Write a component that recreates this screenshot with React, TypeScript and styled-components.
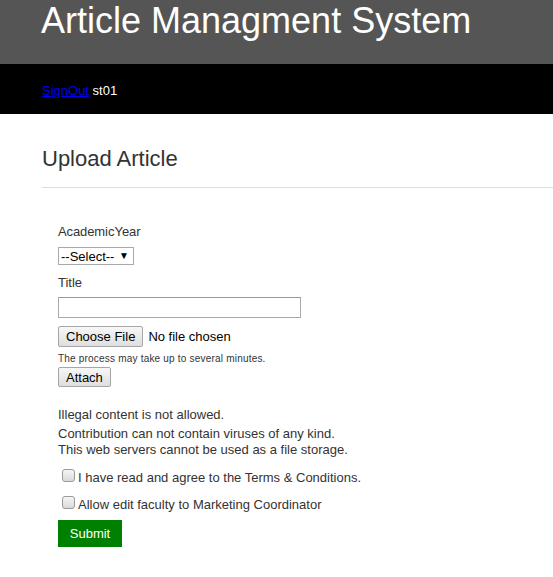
import React from "react";
import styled, { createGlobalStyle } from "styled-components";

const Global = createGlobalStyle`
  html, body { margin: 0; padding: 0; background: #fff; }
  body { font-family: "Liberation Sans", Arial, sans-serif; color: #333; }
  * { box-sizing: border-box; }
`;

const Header = styled.header`
  height: 64px;
  background: #555;
  padding: 0 41px;
`;

const SiteTitle = styled.h1`
  margin: 0;
  font-size: 36px;
  line-height: 42px;
  font-weight: normal;
  color: #fff;
`;

const NavBar = styled.nav`
  height: 50px;
  background: #000;
  padding: 19px 42px 0;
  font-size: 13px;
  line-height: 15px;
  color: #fff;
`;

const NavLink = styled.a`
  color: #0000ee;
  text-decoration: underline;
`;

const Main = styled.main`
  padding-left: 42px;
`;

const PageTitle = styled.h2`
  margin: 32px 0 0;
  font-size: 22px;
  line-height: 25px;
  font-weight: normal;
  color: #333;
`;

const Rule = styled.hr`
  margin: 16px 0 0;
  border: 0;
  border-top: 1px solid #dddddd;
  height: 0;
`;

const Form = styled.form`
  display: flex;
  flex-direction: column;
  align-items: flex-start;
  padding-left: 16px;
  font-size: 13px;
  line-height: 15px;
`;

const Label = styled.label<{ $top: number; $tight?: boolean }>`
  display: block;
  margin-top: ${(p) => p.$top}px;
  color: #333;
  word-spacing: ${(p) => (p.$tight ? "-3px" : "normal")};
  letter-spacing: ${(p) => (p.$tight ? "-0.1px" : "normal")};
`;

const SelectWrap = styled.div`
  position: relative;
  margin-top: 8px;
  width: 76px;
  height: 18px;
`;

const Select = styled.select`
  appearance: none;
  width: 100%;
  height: 100%;
  border: 1px solid #a9a9a9;
  background: #fff;
  font-family: inherit;
  font-size: 13px;
  color: #000;
  padding: 0 0 0 2px;
  margin: 0;
  border-radius: 0;
`;

const Arrow = styled.span`
  position: absolute;
  right: 5px;
  top: 3px;
  font-size: 10px;
  line-height: 12px;
  color: #000;
  pointer-events: none;
`;

const TextInput = styled.input`
  margin-top: 7px;
  width: 243px;
  height: 21px;
  border: 1px solid #a9a9a9;
  border-top-color: #999;
  padding: 0 3px;
  font-family: inherit;
  font-size: 13px;
`;

const FileRow = styled.div`
  margin-top: 8px;
  display: flex;
  align-items: center;
  gap: 5px;
  height: 21px;
  color: #000;
`;

const GrayButton = styled.button<{ $h: number }>`
  height: ${(p) => p.$h}px;
  padding: 0 7px;
  margin: 0;
  border: 1px solid #a6a6a6;
  border-radius: 2px;
  background: linear-gradient(#f7f7f7, #dedede);
  font-family: inherit;
  font-size: 13px;
  line-height: 15px;
  color: #000;
  cursor: pointer;
`;

const HiddenFile = styled.input`
  display: none;
`;

const Note = styled.div`
  margin-top: 6px;
  font-size: 10px;
  line-height: 12px;
  letter-spacing: 0.2px;
  color: #333;
`;

const AttachRow = styled.div`
  margin-top: 2px;
`;

const Para = styled.p<{ $top: number }>`
  margin: ${(p) => p.$top}px 0 0;
  line-height: 16px;
  color: #333;
`;

const CheckRow = styled.label<{ $top: number }>`
  margin-top: ${(p) => p.$top}px;
  display: flex;
  align-items: flex-start;
  line-height: 16px;
  color: #333;
`;

const Check = styled.input`
  appearance: none;
  width: 13px;
  height: 13px;
  margin: 0 3px 0 4px;
  border: 1px solid #9a9a9a;
  border-radius: 3px;
  background: linear-gradient(#f6f6f6, #d9d9d9);
  position: relative;
  top: -1px;
`;

const Submit = styled.button`
  margin-top: 7px;
  width: 64px;
  height: 27px;
  border: 0;
  background: #008000;
  color: #fff;
  font-family: inherit;
  font-size: 13px;
  cursor: pointer;
`;

export default function App() {
  return (
    <>
      <Global />
      <Header>
        <SiteTitle>Article Managment System</SiteTitle>
      </Header>
      <NavBar>
        <NavLink href="#">SignOut</NavLink> st01
      </NavBar>
      <Main>
        <PageTitle>Upload Article</PageTitle>
        <Rule />
        <Form onSubmit={(e) => e.preventDefault()}>
          <Label $top={36} $tight>
            Academic Year
          </Label>
          <SelectWrap>
            <Select defaultValue="">
              <option value="">--Select--</option>
            </Select>
            <Arrow>▼</Arrow>
          </SelectWrap>
          <Label $top={10}>Title</Label>
          <TextInput type="text" />
          <FileRow>
            <GrayButton type="button" $h={21}>
              Choose File
            </GrayButton>
            <HiddenFile type="file" />
            <span>No file chosen</span>
          </FileRow>
          <Note>The process may take up to several minutes.</Note>
          <AttachRow>
            <GrayButton type="button" $h={20}>
              Attach
            </GrayButton>
          </AttachRow>
          <Para $top={20}>Illegal content is not allowed.</Para>
          <Para $top={3}>
            Contribution can not contain viruses of any kind.
            <br />
            This web servers cannot be used as a file storage.
          </Para>
          <CheckRow $top={12}>
            <Check type="checkbox" />I have read and agree to the Terms &amp; Conditions.
          </CheckRow>
          <CheckRow $top={11}>
            <Check type="checkbox" />Allow edit faculty to Marketing Coordinator
          </CheckRow>
          <Submit type="submit">Submit</Submit>
        </Form>
      </Main>
    </>
  );
}
